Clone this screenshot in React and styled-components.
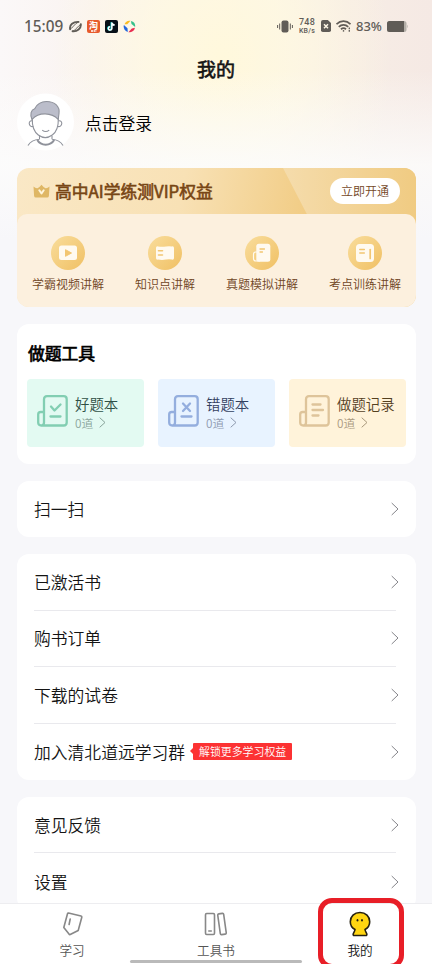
import React from "react";
import styled, { createGlobalStyle } from "styled-components";

const GlobalStyle = createGlobalStyle`
    * {
        box-sizing: border-box;
    }
    body {
        margin: 0;
        background: #f7f7fa;
        font-family: "Noto Sans CJK SC", "Noto Sans", sans-serif;
        font-weight: 350;
        color: #141414;
    }
`

const Tela = styled.div`
    position: relative;
    display: flex;
    flex-direction: column;
    width: 432px;
    height: 964px;
    overflow: hidden;
    background:
        linear-gradient(180deg, rgba(253, 252, 252, 0) 70px, rgba(252, 252, 252, 0.85) 165px, #f7f7fa 240px),
        radial-gradient(ellipse 170px 230px at 222px 60px, #fff8dc 0%, rgba(255, 249, 224, 0.75) 40%, rgba(255, 248, 220, 0) 100%),
        linear-gradient(90deg, #fbf8f8 0%, #faf3f0 22%, #fcf5ec 50%, #f7ede5 80%, #f5e9e4 100%);
`

const BarraStatus = styled.div`
    display: flex;
    align-items: center;
    justify-content: space-between;
    height: 52px;
    padding: 0 24px;
    flex-shrink: 0;
    color: #605c57;
`

const GrupoStatus = styled.div`
    display: flex;
    align-items: center;
    gap: ${props => props.$gap}px;
`

const Hora = styled.span`
    font-family: "Noto Sans", sans-serif;
    font-size: 15.3px;
    font-weight: 500;
    line-height: 20px;
    width: 39px;
    margin-right: 1px;
    white-space: nowrap;
`

const Velocidade = styled.span`
    display: flex;
    flex-direction: column;
    align-items: center;
    font-family: Roboto, sans-serif;
    font-size: 9px;
    line-height: 9px;
    font-weight: 500;
    width: 18px;
    white-space: nowrap;
    letter-spacing: 0.2px;
`

const Unidade = styled.span`
    font-size: 7px;
    line-height: 8px;
`

const Bateria = styled.span`
    font-family: "Noto Sans", sans-serif;
    font-size: 13px;
    font-weight: 500;
    line-height: 20px;
    width: 26px;
    white-space: nowrap;
`

const Titulo = styled.h1`
    margin: 0;
    height: 34px;
    line-height: 34px;
    font-size: 19px;
    font-weight: 400;
    -webkit-text-stroke: 0.6px #141414;
    text-align: center;
    flex-shrink: 0;
`

const Perfil = styled.div`
    display: flex;
    align-items: center;
    gap: 11px;
    height: 58px;
    margin: 7px 17px 17px;
    flex-shrink: 0;
    font-size: 16.8px;
    color: #000;

    span {
        padding-top: 2px;
    }
`

const Conteudo = styled.main`
    display: flex;
    flex-direction: column;
    gap: 17px;
    flex: 1;
    min-height: 0;
    padding: 0 16px 0 17px;
    overflow: hidden;
`

const CardVip = styled.section`
    height: 139px;
    flex-shrink: 0;
    border-radius: 12px;
    overflow: hidden;
    background: linear-gradient(100deg, #fae8c6 0%, #f8e1b5 40%, #f1cb82 72%, #f1cf8b 100%);
`

const TopoVip = styled.div`
    position: relative;
    display: flex;
    align-items: center;
    height: 46px;
    padding: 0 16px;
`

const BrilhoVip = styled.svg`
    position: absolute;
    right: 0;
    top: 0;
`

const TituloVip = styled.h2`
    margin: 0 auto 0 5px;
    font-size: 16.8px;
    line-height: 24px;
    font-weight: 400;
    color: #784615;
    -webkit-text-stroke: 0.6px #784615;
`

const BotaoVip = styled.button`
    position: relative;
    width: 70px;
    height: 26px;
    padding: 0;
    border: 0;
    border-radius: 13px;
    background: #fff;
    color: #74471f;
    font-family: inherit;
    font-weight: inherit;
    font-size: 12px;
    line-height: 26px;
`

const ListaVip = styled.div`
    position: relative;
    display: flex;
    justify-content: space-between;
    height: 93px;
    padding: 22px 15px 0;
    border-radius: 10px 10px 0 0;
    background: #fcf0de;
`

const ItemVip = styled.div`
    display: flex;
    flex-direction: column;
    align-items: center;
    gap: 4px;
    font-size: 12px;
    line-height: 20px;
    color: #6f451f;
`

const CirculoVip = styled.div`
    display: flex;
    align-items: center;
    justify-content: center;
    width: 34px;
    height: 34px;
    border-radius: 50%;
    background: linear-gradient(135deg, #f9dd9c, #f0c064);
`

const Card = styled.section`
    flex-shrink: 0;
    border-radius: 12px;
    background: #fff;
`

const CardFerramentas = styled(Card)`
    height: 140px;
    padding: 17px 10px 0;
`

const TituloCard = styled.h2`
    margin: 0 0 14px 1px;
    font-size: 16.8px;
    line-height: 24px;
    font-weight: 400;
    color: #000;
    -webkit-text-stroke: 0.7px #000;
`

const Ferramentas = styled.div`
    display: grid;
    grid-template-columns: repeat(3, 1fr);
    gap: 14px;
`

const Ferramenta = styled.div`
    display: flex;
    align-items: center;
    gap: 7px;
    height: 68px;
    padding: 0 0 3px 10px;
    border-radius: 4px;
    background: ${props => props.$fundo};
    color: ${props => props.$cor};

    > svg {
        position: relative;
        top: -1px;
    }
`

const NomeFerramenta = styled.div`
    padding-top: 2px;
    font-size: 14.4px;
    line-height: 20px;
    white-space: nowrap;
`

const Contagem = styled.div`
    display: flex;
    align-items: center;
    gap: 6px;
    font-size: 11.8px;
    line-height: 18px;
    opacity: 0.5;
`

const CardLista = styled(Card)`
    padding: 0 17px;
`

const Linha = styled.div`
    display: flex;
    align-items: center;
    height: 56.4px;
    margin-right: 3px;
    font-size: 16.8px;
    color: #141414;

    &:not(:last-child) {
        border-bottom: 1px solid #e9e9ed;
    }
`

const Seta = styled.svg`
    margin: 0 -3px 0 auto;
    flex-shrink: 0;
`

const Etiqueta = styled.span`
    position: relative;
    margin-left: 8px;
    height: 17px;
    padding: 0 6px;
    border-radius: 1px;
    background: #fc3233;
    color: #fff;
    font-size: 10.9px;
    line-height: 17px;

    &::before {
        content: "";
        position: absolute;
        left: -3px;
        top: 5px;
        border: 3px solid transparent;
        border-left: 0;
        border-right-color: #fc3233;
    }
`

const Navegacao = styled.nav`
    position: relative;
    display: grid;
    grid-template-columns: repeat(3, 1fr);
    height: 61px;
    flex-shrink: 0;
    border-top: 1px solid #ededf0;
    background: #fff;
`

const Aba = styled.div`
    display: flex;
    flex-direction: column;
    align-items: center;
    padding-top: 6px;
    font-size: 12.6px;
    line-height: 20px;
    color: ${props => props.$ativa ? "#111" : "#555"};

    svg {
        margin-bottom: 2px;
    }
`

const BarraInicio = styled.div`
    position: absolute;
    left: 130px;
    bottom: 1px;
    width: 172px;
    height: 3px;
    border-radius: 2px;
    background: #bababa;
`

const Destaque = styled.div`
    position: absolute;
    left: 318px;
    top: 898px;
    width: 86px;
    height: 71px;
    border: 5px solid #e81e27;
    border-radius: 14px;
`

function IconesApps() {
    return (
        <>
            <svg width="13" height="13" viewBox="0 0 13 13" fill="none" stroke="#605c57" strokeLinecap="round">
                <path d="M1.200 9.200C0 5 4.500 1.500 9.500 1.900M3.500 11.300c4.700.5 8.800-2.800 8.300-7" strokeWidth="1.900" />
                <path d="M1.200 9.200C3.500 8.500 5 4 9.500 1.900M3.500 11.300C7.500 10 8.500 6 11.800 4.300" strokeWidth=".9" />
            </svg>
            <svg width="13" height="13" viewBox="0 0 13 13">
                <rect width="13" height="13" rx="2" fill="#e75a2c" />
                <text x="6.5" y="8.800" fontSize="9" fontWeight="700" fill="#fff" textAnchor="middle">淘</text>
                <path d="M4 11h5.500" stroke="#fff" strokeWidth="1.300" strokeDasharray="2 .6" />
            </svg>
            <svg width="13" height="13" viewBox="0 0 13 13" fill="none">
                <rect width="13" height="13" rx="2" fill="#071018" />
                <path d="M6.700 2.500v5.900A1.700 1.700 0 1 1 5 6.700M6.700 3c.4 1.400 1.400 2 2.800 2.100" stroke="#25f4ee" strokeWidth="1.500" transform="translate(-.4 -.2)" />
                <path d="M6.900 2.500v5.900a1.700 1.700 0 1 1-1.700-1.700M6.900 3c.4 1.400 1.400 2 2.800 2.100" stroke="#fff" strokeWidth="1.500" />
            </svg>
            <svg width="13" height="13" viewBox="0 0 13 13">
                <path d="M1.500 4.300A5.500 5.500 0 0 1 7.500.8L4.300 4.300Z" fill="#f9bd25" />
                <path d="M7.900.9A5.700 5.700 0 0 1 12.200 7L8.500 4Z" fill="#34c08a" />
                <path d="M12 7.700a5.600 5.600 0 0 1-6.600 4.500l3.400-3.600Z" fill="#e92d50" />
                <path d="M.9 5A5.700 5.700 0 0 0 4.800 12l-.3-3.700Z" fill="#2366de" />
            </svg>
        </>
    )
}

function Status() {
    return (
        <BarraStatus>
            <GrupoStatus $gap={5}>
                <Hora>15:09</Hora>
                <IconesApps />
            </GrupoStatus>
            <GrupoStatus $gap={5}>
                <svg width="16" height="13" viewBox="0 0 16 13" fill="#605c57">
                    <rect x="4.500" y=".5" width="7" height="12" rx="2" />
                    <path d="M2.700 3.500v6M.6 5v3M13.300 3.500v6M15.400 5v3" stroke="#605c57" />
                </svg>
                <Velocidade>
                    <span>748</span>
                    <Unidade>KB/s</Unidade>
                </Velocidade>
                <svg width="10" height="12" viewBox="0 0 10 12">
                    <path d="M2 0h4.800L10 3v7.200A1.800 1.800 0 0 1 8.200 12H1.800A1.800 1.800 0 0 1 0 10.200V2a2 2 0 0 1 2-2Z" fill="#605c57" />
                    <path d="m3 4.200 4 4m0-4-4 4" stroke="#fff7e6" strokeWidth="1.500" />
                </svg>
                <svg width="15" height="12" viewBox="0 0 15 12" fill="none" stroke="#605c57" strokeWidth="1.800">
                    <path d="M.5 4.200c4-4 10-4 14 0M2.800 6.800c2.700-2.600 6.700-2.600 9.400 0M5 9.200c1.600-1.400 3.400-1.400 5 0" />
                    <circle cx="7.500" cy="10.900" r=".8" fill="#605c57" stroke="none" />
                    <path d="M13.300 7.500v1.800M13.300 10v1.800" strokeWidth="1.300" />
                </svg>
                <Bateria>83%</Bateria>
                <svg width="21" height="11" viewBox="0 0 21 11">
                    <rect width="19.500" height="11" rx="2.500" fill="#b4afa8" />
                    <path d="M2.500 0H17v11H2.500A2.500 2.500 0 0 1 0 8.500v-6A2.500 2.500 0 0 1 2.500 0Z" fill="#605c57" />
                    <path d="M20 3.800q1.400 1.700 0 3.400Z" fill="#b4afa8" />
                </svg>
            </GrupoStatus>
        </BarraStatus>
    )
}

function Avatar() {
    return (
        <svg width="57" height="58" viewBox="0 0 57 58" fill="none" stroke="#8f929b" strokeWidth="1.1">
            <circle cx="28.5" cy="29" r="28.5" fill="#fff" stroke="none" />
            <path d="M15.500 28c-4.500-1.500-4.500 6.500.8 5.500M41.500 28c4.500-1.500 4.500 6.500-.8 5.500" />
            <path d="M15.300 25.500c-.3 8.500 1.300 13 6 16.500 4.500 3.300 9.500 3.300 14 0 4.700-3.500 6.300-8 6-16.500" />
            <path d="M15 26.500c-2.300-5-1-9.800 2.700-10.800 2.300-4.700 6.300-7.200 11.800-7.200 8.500 0 13.500 5 12.500 12l-.8 6c-6.500-7.300-19.500-7.800-26.200 0Z" fill="#bbbdca" />
            <path d="M25.200 37.100q3.500 2.900 7 0" />
            <path d="M22.500 43v3.200M35 43v3.200M22.500 46.200c-5.600.4-9.100 2-11.500 6.300M35 46.200c5.600.4 8.600 2 11 6.300" />
            <path d="M20.300 47c3.500 6.200 13.200 6.200 16.900 0" strokeWidth="2" />
        </svg>
    )
}

function SetaDireita() {
    return (
        <Seta width="8" height="14" viewBox="0 0 8 14" fill="none" stroke="#85858a" strokeWidth="1">
            <path d="m.7 1 6.300 6L.7 13" />
        </Seta>
    )
}

const desenhosVip = {
    video: (
        <>
            <rect x="1" y="2.500" width="18" height="14.500" rx="2.500" fill="#fffaf0" />
            <path d="M7.500 6.700v6.600L13.500 10Z" fill="#f2c672" stroke="#f2c672" strokeLinejoin="round" />
        </>
    ),
    livro: (
        <>
            <path d="M1 5q0-2 2-1.600 4 .8 8 0 3-.5 6 0 2-.4 2 1.600v10q0 2-2 1.600-3-.6-6 0-4 .8-8 0-2 .4-2-1.600Z" fill="#fffaf0" />
            <path d="M3.500 7.700h4M3.500 12h4" stroke="#f2c672" strokeWidth="1.600" strokeLinecap="round" />
        </>
    ),
    prova: (
        <>
            <path d="M5 9H3.500Q1.500 9 1.500 11.500v4Q1.500 18 4 18h4" stroke="#fffaf0" strokeWidth="1.200" fill="none" />
            <rect x="4.300" y=".7" width="14" height="18" rx="2.500" fill="#fffaf0" />
            <path d="M8 6h4.500M8 9h2.500" stroke="#f2c672" strokeWidth="1.300" strokeLinecap="round" />
        </>
    ),
    treino: (
        <>
            <rect x="1" y="1" width="18" height="18" rx="3.500" fill="#fffaf0" />
            <path d="M4.800 6.500h4.500M4.800 10h4.500" stroke="#f2c672" strokeWidth="1.500" strokeLinecap="round" />
            <path d="M15.200 6.500v9" stroke="#f2c672" strokeWidth="1.700" strokeLinecap="round" />
        </>
    ),
}

function BeneficioVip(props) {
    return (
        <ItemVip>
            <CirculoVip>
                <svg width="20" height="20" viewBox="0 0 20 20">{desenhosVip[props.icone]}</svg>
            </CirculoVip>
            <span>{props.titulo}</span>
        </ItemVip>
    )
}

function CardFerramenta(props) {
    return (
        <Ferramenta $fundo={props.fundo} $cor={props.cor}>
            <svg width="31" height="32" viewBox="0 0 31 32" fill="none" stroke={props.traco} strokeWidth="2.300" strokeLinecap="round" strokeLinejoin="round">
                <path d="M7 27.500V4.200q0-3 3-3h16.700q3 0 3 3v23.300q0 3-3 3H4.200q-3 0-3-3V19.500q0-2.500 2.500-2.500H7v10.500q0 2.500-2.300 3" />
                <path d={props.desenho} />
            </svg>
            <div>
                <NomeFerramenta>{props.titulo}</NomeFerramenta>
                <Contagem>
                    0道
                    <svg width="7" height="11" viewBox="0 0 7 11" fill="none" stroke="currentColor">
                        <path d="m.7.700 5.300 4.800L.7 10.300" />
                    </svg>
                </Contagem>
            </div>
        </Ferramenta>
    )
}

function Item(props) {
    return (
        <Linha>
            {props.titulo}
            {props.etiqueta && <Etiqueta>{props.etiqueta}</Etiqueta>}
            <SetaDireita />
        </Linha>
    )
}

function App() {
    return (
        <Tela>
            <GlobalStyle />
            <Status />
            <Titulo>我的</Titulo>
            <Perfil>
                <Avatar />
                <span>点击登录</span>
            </Perfil>

            <Conteudo>
                <CardVip>
                    <TopoVip>
                        <BrilhoVip width="134" height="58" viewBox="0 0 134 58">
                            <defs>
                                <linearGradient id="brilho">
                                    <stop offset="0" stopColor="#f5dcac" />
                                    <stop offset="1" stopColor="#f0cb82" />
                                </linearGradient>
                            </defs>
                            <path d="M1 0h133v58H31Z" fill="url(#brilho)" />
                        </BrilhoVip>
                        <svg width="17" height="14" viewBox="0 0 17 14">
                            <path d="M.5 2.500q2 2 4 1.700Q6.500 3.500 8.500.800q2 2.700 4 3.400 2 .3 4-1.700l-.6 9.500q-.2 1.500-1.700 1.500H2.800q-1.500 0-1.700-1.500Z" fill="#dfb765" />
                            <path d="m6.300 6.300 2.200 3.200 2.200-3.200" stroke="#fff5dc" strokeWidth="2" fill="none" strokeLinecap="round" strokeLinejoin="round" />
                        </svg>
                        <TituloVip>高中AI学练测VIP权益</TituloVip>
                        <BotaoVip>立即开通</BotaoVip>
                    </TopoVip>
                    <ListaVip>
                        <BeneficioVip icone="video" titulo="学霸视频讲解" />
                        <BeneficioVip icone="livro" titulo="知识点讲解" />
                        <BeneficioVip icone="prova" titulo="真题模拟讲解" />
                        <BeneficioVip icone="treino" titulo="考点训练讲解" />
                    </ListaVip>
                </CardVip>

                <CardFerramentas>
                    <TituloCard>做题工具</TituloCard>
                    <Ferramentas>
                        <CardFerramenta titulo="好题本" fundo="#e3faf2" cor="#2f4f45" traco="#82ceb2" desenho="m14 11.500 3.500 4 6-6M13.500 21.500h10" />
                        <CardFerramenta titulo="错题本" fundo="#e8f3ff" cor="#33415f" traco="#94aede" desenho="m15 8.500 7 7.500M22 8.500 15 16M13.500 21.500h10" />
                        <CardFerramenta titulo="做题记录" fundo="#fff3da" cor="#54401f" traco="#dec49a" desenho="M13.500 9.500h8M13.500 15h10.500M13.500 20.500h6" />
                    </Ferramentas>
                </CardFerramentas>

                <CardLista>
                    <Item titulo="扫一扫" />
                </CardLista>

                <CardLista>
                    <Item titulo="已激活书" />
                    <Item titulo="购书订单" />
                    <Item titulo="下载的试卷" />
                    <Item titulo="加入清北道远学习群" etiqueta="解锁更多学习权益" />
                </CardLista>

                <CardLista>
                    <Item titulo="意见反馈" />
                    <Item titulo="设置" />
                </CardLista>
            </Conteudo>

            <Navegacao>
                <Aba>
                    <svg width="24" height="28" viewBox="0 0 24 28" fill="none" stroke="#888" strokeWidth="1.600" strokeLinejoin="round" strokeLinecap="round">
                        <path d="M8.500 3 21 6q1 .3.800 1.300l-3.600 13.200-8 4Q9.500 24.800 9 24L3.800 17.500 7.500 3.700q.2-.8 1-.7ZM10.200 9 9.100 14.500" />
                    </svg>
                    学习
                </Aba>
                <Aba>
                    <svg width="24" height="28" viewBox="0 0 24 28" fill="none" stroke="#888" strokeWidth="1.600" strokeLinejoin="round" strokeLinecap="round">
                        <rect x="1.500" y="3.500" width="9" height="21" rx="1.200" />
                        <path d="M4.800 21h2.500" />
                        <rect x="15" y="3.500" width="6" height="21" rx="1.200" transform="rotate(-8 18 14)" />
                    </svg>
                    工具书
                </Aba>
                <Aba $ativa>
                    <svg width="24" height="28" viewBox="0 0 24 28">
                        <path d="M12 2.500c-5.700 0-9.700 4-9.700 9.200 0 4 2.200 6.400 4.700 7.800-.3 2-1.300 3-1.800 4.500-.2.800.1 1.500 1 1.500h11.600c.9 0 1.200-.7 1-1.500-.5-1.500-1.500-2.500-1.800-4.500 2.500-1.400 4.700-3.800 4.700-7.800 0-5.200-4-9.200-9.700-9.200Z" fill="#ffd511" stroke="#252010" strokeWidth="1.600" strokeLinejoin="round" />
                        <ellipse cx="9.500" cy="10.300" rx=".9" ry="1.300" fill="#252010" />
                        <ellipse cx="14" cy="10.300" rx=".9" ry="1.300" fill="#252010" />
                    </svg>
                    我的
                </Aba>
                <BarraInicio />
            </Navegacao>
            <Destaque />
        </Tela>
    )
}

export default App;
